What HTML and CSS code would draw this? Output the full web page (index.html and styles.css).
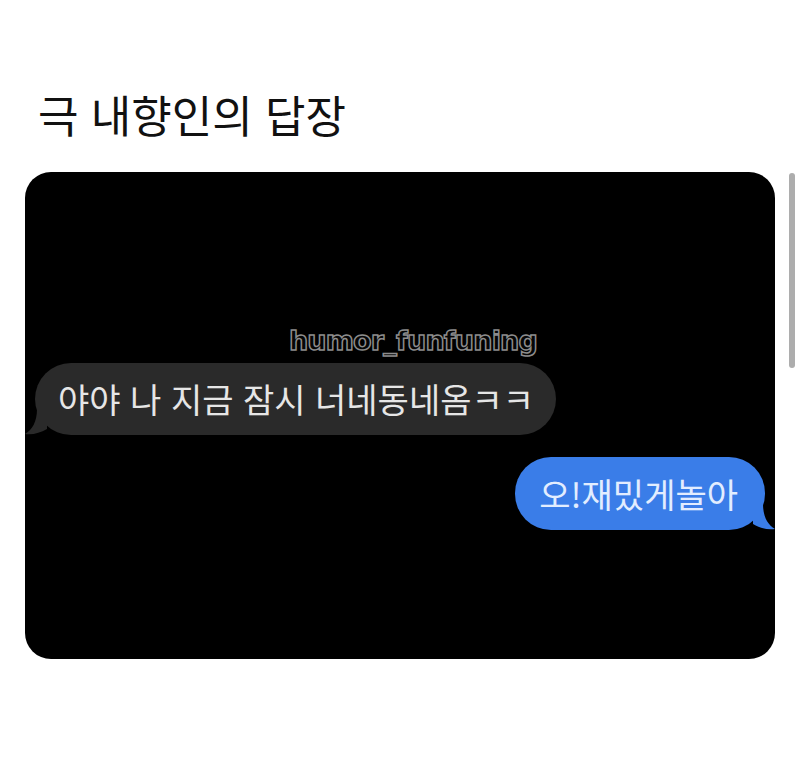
FILE: index.html
```html
<!DOCTYPE html>
<html lang="ko">
<head>
  <meta charset="UTF-8">
  <meta name="viewport" content="width=device-width, initial-scale=1.0">
  <title>극 내향인의 답장</title>
  <link rel="stylesheet" href="styles.css">
</head>
<body>
  <div class="page">
    <!-- Post title -->
    <h1 class="post-title">극 내향인의 답장</h1>

    <div class="post-row">
      <!-- Chat screenshot card -->
      <div class="chat-card">
        <div class="watermark">humor_funfuning</div>

        <div class="msg-row received">
          <div class="bubble bubble-gray">
            <svg class="tail tail-left" viewBox="0 0 22 26" width="22" height="26">
              <path d="M12 0 C12 13 7 21 0 25 C8 26 15 24 22 20 L22 0 Z" fill="#2a2a2a"/>
            </svg>
            야야 나 지금 잠시 너네동네옴ㅋㅋ
          </div>
        </div>

        <div class="msg-row sent">
          <div class="bubble bubble-blue">
            <svg class="tail tail-right" viewBox="0 0 22 26" width="22" height="26">
              <path d="M10 0 C10 13 15 21 22 25 C14 26 7 24 0 20 L0 0 Z" fill="#3a7de8"/>
            </svg>
            오!재밌게놀아
          </div>
        </div>
      </div>

      <!-- Scrollbar thumb -->
      <div class="scroll-thumb"></div>
    </div>
  </div>
</body>
</html>
```

FILE: styles.css
```css
/* Page */
body {
  margin: 0;
  padding: 0;
  background: #fff;
  font-family: "Noto Sans CJK KR", "Noto Sans", sans-serif;
}

.page {
  width: 800px;
  height: 765px;
  padding-top: 86px;
  box-sizing: border-box;
}

/* Title */
.post-title {
  margin: 0 0 0 38px;
  font-size: 44px;
  font-weight: 400;
  line-height: 56px;
  color: #111;
}

.post-row {
  display: flex;
  align-items: flex-start;
  gap: 14px;
  margin-top: 30px;
  margin-left: 25px;
}

/* Black chat card */
.chat-card {
  width: 750px;
  height: 487px;
  background: #000;
  border-radius: 26px;
  padding-top: 153px;
  box-sizing: border-box;
  display: flex;
  flex-direction: column;
}

.watermark {
  text-align: center;
  font-family: "DejaVu Sans", sans-serif;
  font-weight: bold;
  font-size: 27px;
  line-height: 32px;
  letter-spacing: -0.8px;
  color: #050505;
  -webkit-text-stroke: 1.5px #8c8c8c;
  margin-left: 26px;
}

.msg-row {
  display: flex;
}

.msg-row.received {
  justify-content: flex-start;
  padding-left: 10px;
  margin-top: 6px;
}

.msg-row.sent {
  justify-content: flex-end;
  padding-right: 10px;
  margin-top: 22px;
}

/* Bubbles */
.bubble {
  position: relative;
  font-size: 34px;
  line-height: 40px;
  padding: 16px 22px 16px 23px;
  border-radius: 36px;
  white-space: nowrap;
}

.bubble-gray {
  background: #2a2a2a;
  color: #e6e6e6;
}

.bubble-blue {
  background: #3a7de8;
  color: #e2edff;
  padding: 17px 27px 16px 24px;
}

/* Bubble tails */
.tail {
  position: absolute;
  bottom: 0;
  display: block;
}

.tail-left {
  left: -10px;
}

.tail-right {
  right: -10px;
}

/* Scrollbar */
.scroll-thumb {
  width: 6px;
  height: 195px;
  margin-top: 1px;
  background: #adadad;
  border-radius: 3px;
}
```
